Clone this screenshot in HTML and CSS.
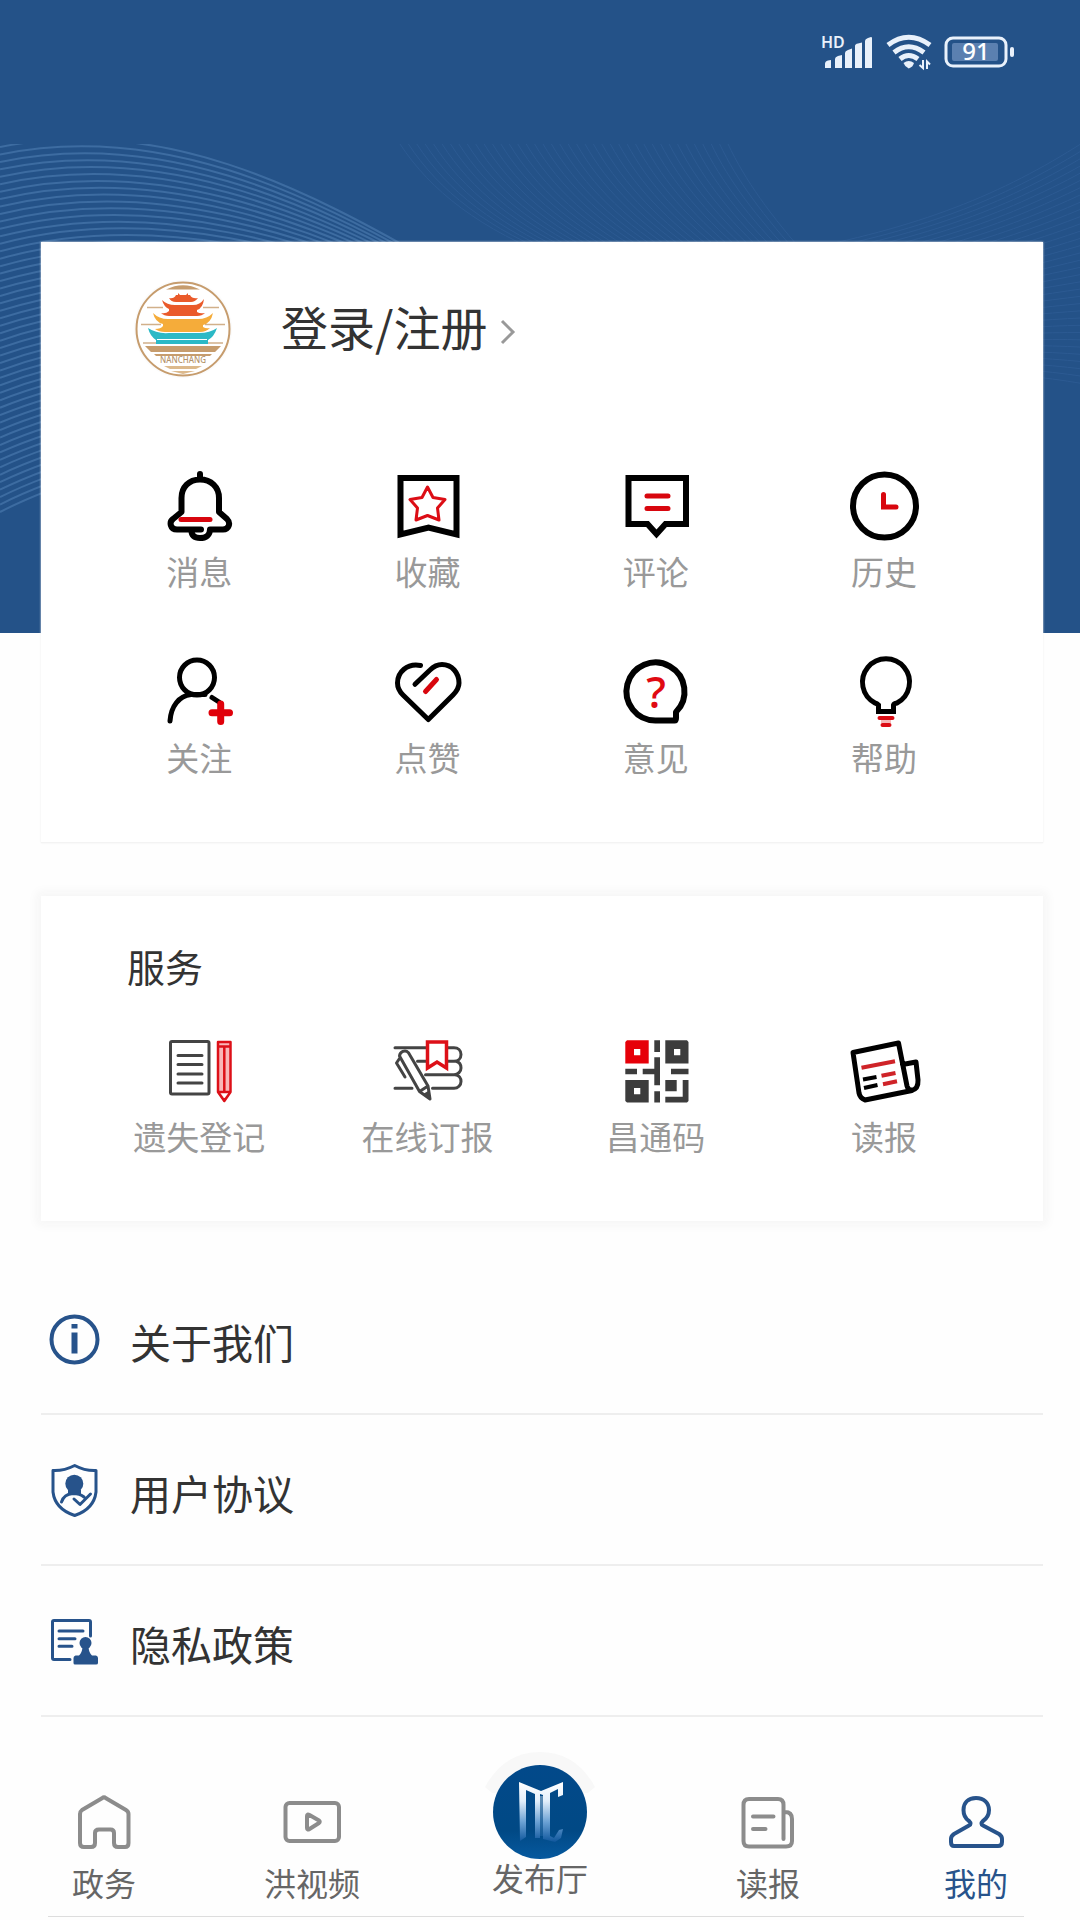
FILE: index.html
```html
<!DOCTYPE html>
<html lang="zh-CN">
<head>
<meta charset="utf-8">
<meta name="viewport" content="width=device-width, initial-scale=1">
<title>我的</title>
<link rel="stylesheet" href="styles.css">
</head>
<body>
<header class="hero">
  <svg class="hero-waves" id="waves" width="1080" height="633" viewBox="0 144 1080 489" aria-hidden="true"></svg>
  <div class="status">
    <svg width="54" height="36" viewBox="0 0 54 36" aria-hidden="true">
      <text class="status-hd" x="1" y="14">HD</text>
      <path class="status-fill" d="M5 30Q5 27 8 26.500L11 26V34H5ZM15 25Q15 23 18 22L22 21V34H15ZM25 19Q25 17 28 16L32 14.500V34H25ZM35 12Q35 10 38 9.500L42 8.500V34H35ZM45 7Q45 5 48 4L51 3Q52 3 52 4V34H45Z"/>
    </svg>
    <svg width="48" height="38" viewBox="0 0 48 38" aria-hidden="true">
      <path class="status-arc" d="M3 12Q23.500-3.500 45 12M9 19.500Q23.500 8 39 19.500M15 26Q23.500 19 33 26"/>
      <path class="status-fill" d="M18.500 30Q23.700 26 29 30Q28 34 23.700 35.500Q20 34 18.500 30Z"/>
      <path class="status-updown" d="M38 27V35L34.500 32M42 36V28.500L45 31.500"/>
    </svg>
    <svg width="72" height="32" viewBox="0 0 72 32" aria-hidden="true">
      <rect class="status-case" x="2" y="2" width="60" height="28" rx="7"/>
      <rect class="status-level" x="8" y="7" width="46" height="18" rx="2"/>
      <rect class="status-fill" x="66" y="11" width="4" height="10" rx="2"/>
      <text class="status-num" x="32" y="24">91</text>
    </svg>
  </div>
</header>

<main class="content">
  <section class="card profile">
    <a class="login" href="#login">
      <svg width="100" height="100" viewBox="0 0 100 100" aria-hidden="true">
        <circle cx="50" cy="50" r="49" fill="#fbfbfb"/>
        <circle cx="50" cy="50" r="46.500" fill="#fff" stroke="#c69c6d" stroke-width="2"/>
        <path d="M33 10.500Q50 2 67 10.500ZM12 67H88L82 73H18ZM21 75H79L77 77H23Z" fill="#c69c6d"/>
        <path d="M31 87H69L63 90H37ZM38 92H62L50 95Z" fill="#dcb98c"/>
        <path d="M14 28.500H30M70 28.500H86M8 45.500H28M72 45.500H92M10 64H26M74 64H90" stroke="#d1b08a" stroke-width="1.500"/>
        <path d="M36 19Q41 20 43 16H45V14L47 16H53L55 14V16H57Q59 20 65 19Q62 23 58 23H43Q38 23 36 19ZM29 21Q34 26 42 26H60Q67 26 71 20Q70 29 64 31V33Q67 35 72 34Q69 37 64 37H36Q31 37 28 34Q33 35 36 32V30Q31 28 29 21Z" fill="#ea5a2a"/>
        <path d="M20 34Q26 40 35 40H65Q74 40 80 34Q78 44 70 46V48Q73 50 77 49Q73 53 67 53H32Q26 53 22 50Q28 50 30 47V45Q22 43 20 34Z" fill="#f5ac3a"/>
        <path d="M15 49Q24 55 36 54H66Q77 54 84 49Q81 58 75 61V65H23V61Q17 57 15 49Z" fill="#2bb9c6"/>
        <path d="M24 60.500H74" stroke="#fff" stroke-width="1"/>
        <text class="avatar-name" x="50" y="84">NANCHANG</text>
      </svg>
      <span class="login-text">登录/注册</span>
      <svg width="14" height="26" viewBox="0 0 14 26" aria-hidden="true"><path d="M1 5L12 16L1 27" fill="none" stroke="#999" stroke-width="3"/></svg>
    </a>
    <nav class="grid" aria-label="个人功能">
      <a class="tile" href="#messages">
        <svg class="icon" width="72" height="72" viewBox="0 0 72 72" aria-hidden="true">
          <path class="k5" d="M37 4V9M38 59.500H14C7 59.500 6 52 10 49L18.500 42V28C18.500 17 26 9.500 37 9.500S56 17 56 28V42L64 49C68 53 66 59.500 60 59.500H47C47 65 43 68 37 68S28.500 65 28.500 61"/>
          <path class="r5" d="M18 49.500H47"/>
        </svg>
        <span>消息</span>
      </a>
      <a class="tile" href="#favorites">
        <svg class="icon" width="72" height="72" viewBox="0 0 72 72" aria-hidden="true">
          <path class="k5 miter" d="M9.500 8H65.500V64.500L37.500 57.500L9.500 64.500Z"/>
          <path class="r3" d="M36.500 17L42 27.500L54 29.500L46.500 38L48 50L36.500 45.500L25 50L26.500 38L19 29.500L31 27.500Z"/>
        </svg>
        <span>收藏</span>
      </a>
      <a class="tile" href="#comments">
        <svg class="icon" width="72" height="72" viewBox="0 0 72 72" aria-hidden="true">
          <path class="k5 miter" d="M8.500 8H66V54H45.500L36.500 64L27.500 54H8.500Z"/>
          <path class="r5" d="M27 26H48M27 38.500H48"/>
        </svg>
        <span>评论</span>
      </a>
      <a class="tile" href="#history">
        <svg class="icon" width="72" height="72" viewBox="0 0 72 72" aria-hidden="true">
          <circle class="k5" cx="36.500" cy="36" r="31.500"/>
          <path class="r5 miter" d="M35.500 24.500V37H48"/>
        </svg>
        <span>历史</span>
      </a>
      <a class="tile" href="#follow">
        <svg class="icon" width="72" height="72" viewBox="0 0 72 72" aria-hidden="true">
          <circle class="k4" cx="34" cy="21.500" r="17.500"/>
          <path class="k4" d="M7 65C8 50 16 40 28 38.500H42M49 41.500L56 46"/>
          <path class="r7" d="M57.700 48V65.500M49 56.700H66.500"/>
        </svg>
        <span>关注</span>
      </a>
      <a class="tile" href="#likes">
        <svg class="icon" width="72" height="72" viewBox="0 0 72 72" aria-hidden="true">
          <path class="k4" d="M29.500 9.500C16 7 6.500 16 6.500 27C6.500 33 9 36 12 39L37.300 63.500L62 39C66 35 68 32 68 27C68 17 61 8.500 51 8.500C46 8.500 42 11 39 14L24 28.300"/>
          <path class="r5" d="M34.500 35.500L45.500 23.500"/>
        </svg>
        <span>点赞</span>
      </a>
      <a class="tile" href="#feedback">
        <svg class="icon" width="72" height="72" viewBox="0 0 72 72" aria-hidden="true">
          <path class="k5" d="M56 56A29 29 0 1 0 36 64.500H54.500Q56 64.500 56 62Z"/>
          <text class="question" x="36" y="52">?</text>
        </svg>
        <span>意见</span>
      </a>
      <a class="tile" href="#help">
        <svg class="icon" width="72" height="72" viewBox="0 0 72 72" aria-hidden="true">
          <path class="k4 miter" d="M30.500 55.500V49Q29 47.500 27 47A23.500 23.500 0 1 1 49 47Q46 47.500 45.500 49V55.500Z"/>
          <path d="M33 65.500H43" stroke="#f6b9b9" stroke-width="3"/>
          <path class="r4" d="M31.500 62H44.500M34.500 69H41.500"/>
        </svg>
        <span>帮助</span>
      </a>
    </nav>
  </section>

  <section class="card services">
    <h2 class="services-title">服务</h2>
    <nav class="grid" aria-label="服务">
      <a class="tile" href="#lost">
        <svg class="icon" width="72" height="72" viewBox="0 0 72 72" aria-hidden="true">
          <rect class="g3" x="7.500" y="6.500" width="38.500" height="52.500" rx="1.500"/>
          <path class="g3" d="M15 20.500H39M15 29.500H39M15 39H39M15 48H39"/>
          <path d="M55 7H67.500V57L61.300 66L55 57Z" fill="#f9b6b8" stroke="#dd1018" stroke-width="2.500" stroke-linejoin="round"/>
          <path d="M57 57H66L61.300 63Z" fill="#fff"/>
          <path d="M55 11.500H67.500M61.300 12V56M55 57H67.500" stroke="#dd1018" stroke-width="2.500"/>
          <path d="M59 63H63.500L61.300 67Z" fill="#dd1018"/>
        </svg>
        <span>遗失登记</span>
      </a>
      <a class="tile" href="#subscribe">
        <svg class="icon" width="72" height="72" viewBox="0 0 72 72" aria-hidden="true">
          <path class="g3" d="M4 12.700H35M56.500 12.700H63C67 12.700 70 15.500 70 19.500S67 26.300 63 26.300H57M26.500 26.300H35M65 26.300C68 27 70 29.500 70 33S67 39.700 63 39.700H34.500M64 39.700C68 40 70 43 70 46.500S67 53.300 63 53.300H41.500M4 53.300H21"/>
          <path class="g3" d="M8.500 21C9 17 14 14 17.500 17.700L37 51L39 64L28.500 56.500ZM28.500 56.500L37 51M14 42L5.500 28L8.500 23.500"/>
          <path d="M32 59L38 55.500L39.500 65Z" fill="#444"/>
          <path d="M36.500 7H55.500V33L46 27L36.500 33Z" fill="#fff" stroke="#dd1018" stroke-width="3.500"/>
        </svg>
        <span>在线订报</span>
      </a>
      <a class="tile" href="#code">
        <svg class="icon" width="72" height="72" viewBox="0 0 72 72" aria-hidden="true">
          <path d="M7 5.300H28.700V28.500H5.300V7ZM14 14V20.300H20.300V14Z" fill="#e60009" fill-rule="evenodd"/>
          <path d="M45.300 5.300H67L68.500 7V28.500H45.300ZM54 14V20.300H60.300V14ZM5.300 45H28.700V67.500H7L5.300 66ZM14 53V59.300H20.300V53ZM34.300 5.300H40V17H34.300ZM34.300 22.300H40V50.300H34.300V39.300H22.700V33.700H34.300ZM34.300 56.300H40V67.500H34.300ZM5.300 33.700H17V39.300H5.300ZM51 33.700H68.500V39.300H51ZM45.300 45H56.700V56.300H45.300ZM62.700 45H68.500V66L67 67.500H45.300V61.700H62.700Z" fill="#3c3c3c" fill-rule="evenodd"/>
        </svg>
        <span>昌通码</span>
      </a>
      <a class="tile" href="#paper">
        <svg class="icon" width="72" height="72" viewBox="0 0 72 72" aria-hidden="true">
          <path class="k4" d="M5 17.500L50.500 8L59 51Q60 55 64 55.500L17 65Q12 63 11 58ZM54.500 29.500L68 27L70 45Q70.500 54 63.500 55.500"/>
          <path d="M13.500 32.700L47 26.300M33.500 40.800L47.500 38M35 49.200L49 46.300" stroke="#cf2328" stroke-width="4"/>
          <path d="M15 44.500L28.500 42M16 53L29.500 50" stroke="#000" stroke-width="4"/>
        </svg>
        <span>读报</span>
      </a>
    </nav>
  </section>

  <ul class="list">
    <li><a class="row" href="#about">
      <svg width="54" height="54" viewBox="0 0 54 54" aria-hidden="true">
        <circle cx="27.500" cy="27.500" r="23" fill="none" stroke="#27538b" stroke-width="4"/>
        <path d="M24.500 12H30.500V16.500H24.500ZM24.500 20.500H30.500V41.500H24.500Z" fill="#27538b"/>
      </svg>
      <span class="row-text">关于我们</span>
    </a></li>
    <li><a class="row" href="#terms">
      <svg class="b3" width="54" height="54" viewBox="0 0 54 54" aria-hidden="true">
        <path d="M27.700 2.500Q17 8 6 7.500V29Q8 46 27.700 52.500Q47 46 49 29V7.500Q38 8 27.700 2.500Z"/>
        <circle cx="27.300" cy="20.700" r="9" fill="#27538b" stroke="none"/>
        <path d="M21 27H34V31H21Z" fill="#27538b" stroke="none"/>
        <path d="M14.500 39Q17 31 26 30.500Q33 30.500 37 34M27 36L33 41.500L43.500 31"/>
      </svg>
      <span class="row-text">用户协议</span>
    </a></li>
    <li><a class="row" href="#privacy">
      <svg class="b3" width="54" height="54" viewBox="0 0 54 54" aria-hidden="true">
        <path d="M43.500 22V8Q43.500 6.500 42 6.500H7Q5.500 6.500 5.500 8V44Q5.500 45.500 7 45.500H23M12 17H36M12 24.700H28M12 32.300H25"/>
        <circle cx="38.500" cy="29" r="6" fill="#27538b" stroke="none"/>
        <path d="M35.500 33H41.500Q42 39 45 41.500H49Q51 42 51 44V49Q51 50.500 49 50.500H28Q26.500 50.500 26.500 49V44Q26.500 42 28.500 41.500H32Q35 39 35.500 33Z" fill="#27538b" stroke="none"/>
      </svg>
      <span class="row-text">隐私政策</span>
    </a></li>
  </ul>
</main>

<footer class="tabbar">
  <nav class="tabs" aria-label="主导航">
    <a class="tab" href="#gov">
      <svg class="t4" width="64" height="64" viewBox="0 0 64 64" aria-hidden="true"><path d="M30 8.200Q32 6.500 34 8.200L54 20Q56.500 21.500 56.500 24V53Q56.500 57 53 57H46Q42 57 42 53V43Q42 39.500 38.500 39.500H27Q23 39.500 23 43V53Q23 57 19 57H12Q8 57 8 53V24Q8 21.500 10 20Z"/></svg>
      <span>政务</span>
    </a>
    <a class="tab" href="#video">
      <svg class="t4" width="64" height="64" viewBox="0 0 64 64" aria-hidden="true"><rect x="5.500" y="13" width="53.500" height="38" rx="4"/><path d="M27 26Q27 23.500 29.500 25L39 30.500Q40.500 31.800 39 33L29.500 39Q27 40.500 27 38Z"/></svg>
      <span>洪视频</span>
    </a>
    <a class="tab tab-center" href="#hall">
      <svg width="124" height="108" viewBox="0 0 124 108" aria-hidden="true">
        <defs>
          <linearGradient id="disc" x1="0" y1="0" x2="0" y2="1"><stop offset="0" stop-color="#02498a"/><stop offset=".7" stop-color="#014985"/><stop offset="1" stop-color="#06599f"/></linearGradient>
          <linearGradient id="fade" gradientUnits="userSpaceOnUse" x1="0" y1="32" x2="0" y2="92"><stop offset="0" stop-color="#fff"/><stop offset=".3" stop-color="#e3effb"/><stop offset=".65" stop-color="#6ba1d4"/><stop offset="1" stop-color="#0b539a"/></linearGradient>
        </defs>
        <path d="M7 36Q26 1 62 1T117 36L110 42H14Z" fill="#f8f8f8"/>
        <circle cx="62" cy="61" r="47" fill="url(#disc)"/>
        <path d="M41 31L63 40L85 31V44L80 46V38L72 42V85L76 87L81 79L85 78L83 87L77 91L65 88V44L62 43V87H57V43L48 39V86L42 90Z" fill="url(#fade)"/>
        <path d="M57 45H72V85H57Z" fill="url(#fade)" opacity=".4"/>
      </svg>
      <span>发布厅</span>
    </a>
    <a class="tab" href="#read">
      <svg class="t4" width="64" height="64" viewBox="0 3 64 64" aria-hidden="true"><path d="M47.500 52V18Q47.500 12 42 12H13Q7.500 12 7.500 18V54Q7.500 59.500 13 59.500H50Q56 59.500 56 54V32Q56 25 49 25M17 29.500H37.500M17 42H29.500"/></svg>
      <span>读报</span>
    </a>
    <a class="tab tab-active" href="#me" aria-current="page">
      <svg class="t4" width="64" height="64" viewBox="0 3 64 64" aria-hidden="true"><path d="M32 11C24 11 19.500 16 19.500 23C19.500 28 22 32 25 34Q28 37 25 38.500L10 47Q7 49 7 52V55Q7 59 10 59H54Q58 59 58 55V52Q58 49 55 47L39 38.500Q36 37 39 34C42 32 45 28 45 23C45 16 40 11 32 11Z"/></svg>
      <span>我的</span>
    </a>
  </nav>
  <hr class="tabbar-rule">
</footer>
<script src="waves.js"></script>
</body>
</html>
```
FILE: styles.css
```css
* {
  box-sizing: border-box;
}

body {
  margin: 0;
  min-height: 100vh;
  display: flex;
  flex-direction: column;
  background: #fefefe;
  color: #333;
  font-family: "Noto Sans CJK SC", "Noto Sans", sans-serif;
}

a {
  color: inherit;
  text-decoration: none;
}

svg {
  display: block;
  flex: none;
  overflow: visible;
}

/* Blue header and status bar */
.hero {
  position: relative;
  height: 633px;
  background: #245288;
}

.hero-waves {
  position: absolute;
  left: 0;
  bottom: 0;
  width: 100%;
  height: 489px;
  overflow: hidden;
}

.hero-waves path {
  fill: none;
}

.wave-bright {
  stroke: #3d6ca1;
  stroke-width: 2;
}

.wave-dim {
  stroke: #2c5a92;
  stroke-width: 1;
}

.status {
  display: flex;
  justify-content: flex-end;
  align-items: center;
  gap: 11px;
  padding: 33px 64px 0 0;
}

.status-fill {
  fill: #e9f1fb;
}

.status-arc {
  fill: none;
  stroke: #e9f1fb;
  stroke-width: 5;
}

.status-updown {
  fill: none;
  stroke: #e9f1fb;
  stroke-width: 2;
}

.status-case {
  fill: none;
  stroke: #e9f1fb;
  stroke-width: 3;
}

.status-level {
  fill: #5b80b0;
}

.status-hd {
  fill: #e9f1fb;
  font: 600 16px "Noto Sans", sans-serif;
}

.status-num {
  fill: #fff;
  font: 500 24px "Noto Sans", sans-serif;
  text-anchor: middle;
}

/* Cards */
.content {
  position: relative;
  margin: -391px 37px 0 41px;
}

.card {
  background: #fff;
}

.profile {
  padding: 37px 45px 65px 44px;
  border-bottom: 1px solid #f3f3f3;
  box-shadow: 0 0 2px #eee;
}

.login {
  display: flex;
  align-items: center;
  margin-left: 48px;
}

.login-text {
  margin: 0 14px 0 48px;
  padding-bottom: 6px;
  font-size: 47px;
  line-height: 60px;
}

.avatar-name {
  fill: #b5946d;
  font: 500 8px "Noto Sans", sans-serif;
  text-anchor: middle;
}

.grid {
  display: grid;
  grid-template-columns: repeat(4, 1fr);
  row-gap: 65px;
}

.profile .grid {
  margin-top: 91px;
}

.tile {
  display: flex;
  flex-direction: column;
  align-items: center;
  gap: 9px;
  color: #999;
  font-size: 33px;
  line-height: 40px;
}

.services {
  margin-top: 53px;
  padding: 42px 45px 65px 44px;
  box-shadow: 0 0 10px 4px #f5f5f5;
}

.services-title {
  margin: 0 0 41px 42px;
  font-size: 38px;
  font-weight: 400;
  line-height: 56px;
}

/* Icon strokes */
.k5,
.k4,
.r3,
.r4,
.r5,
.r7,
.g3,
.b3,
.t4 {
  fill: none;
  stroke-linecap: round;
  stroke-linejoin: round;
}

.k5 {
  stroke: #000;
  stroke-width: 6;
}

.k4 {
  stroke: #000;
  stroke-width: 5;
}

.r3 {
  stroke: #dc0d15;
  stroke-width: 3;
}

.r4 {
  stroke: #dc0d15;
  stroke-width: 4;
}

.r5 {
  stroke: #d8060e;
  stroke-width: 5;
}

.r7 {
  stroke: #e0000a;
  stroke-width: 7;
}

.g3 {
  stroke: #444;
  stroke-width: 3;
}

.b3 {
  stroke: #27538b;
  stroke-width: 3;
}

.t4 {
  stroke: currentColor;
  stroke-width: 4;
}

.miter {
  stroke-linejoin: miter;
}

.question {
  fill: #e00a12;
  font: 500 44px "Noto Sans", sans-serif;
  text-anchor: middle;
}

/* Settings list */
.list {
  margin: 43px 0 0;
  padding: 0;
  list-style: none;
}

.row {
  display: flex;
  align-items: center;
  gap: 29px;
  height: 151px;
  padding-left: 6px;
  border-bottom: 2px solid #eee;
}

.row-text {
  padding-top: 4px;
  font-size: 41px;
  line-height: 56px;
}

/* Bottom tabs */
.tabbar {
  margin-top: auto;
  padding: 32px 0 3px;
}

.tabs {
  display: grid;
  grid-template-columns: 26fr 26fr 31fr 26fr 26fr;
  align-items: end;
}

.tab {
  display: flex;
  flex-direction: column;
  align-items: center;
  gap: 10px;
  padding-bottom: 16px;
  color: #8c8c8c;
  font-size: 32px;
  line-height: 36px;
}

.tab span {
  color: #666;
}

.tab-center {
  gap: 0;
  padding-bottom: 21px;
}

.tab-active,
.tab-active span {
  color: #27538b;
}

.tabbar-rule {
  height: 1px;
  margin: 0 56px 0 48px;
  border: 0;
  background: #ddd;
}
```
FILE: waves.js
```js
// Each band blends a run of curves from its first cubic to its last.
const bands = [
  { kind: 'wave-bright', count: 50, from: [0, 147, 160, 115, 300, 185, 440, 266], to: [0, 512, 120, 450, 350, 420, 440, 420] },
  { kind: 'wave-dim', count: 40, from: [400, 144, 430, 190, 480, 230, 560, 260], to: [728, 144, 745, 180, 770, 215, 810, 260] },
  { kind: 'wave-dim', count: 34, from: [1090, 138, 1010, 190, 930, 225, 800, 250], to: [1090, 385, 1010, 370, 930, 370, 800, 370] }
];

const svg = document.getElementById('waves');

for (const { kind, count, from, to } of bands) {
  for (let i = 0; i < count; i++) {
    const t = i / (count - 1);
    const p = from.map((v, k) => Math.round((v + (to[k] - v) * t) * 10) / 10);
    const path = document.createElementNS('http://www.w3.org/2000/svg', 'path');
    path.setAttribute('class', kind);
    path.setAttribute('d', `M${p[0]} ${p[1]}C${p.slice(2).join(' ')}`);
    svg.appendChild(path);
  }
}
```
